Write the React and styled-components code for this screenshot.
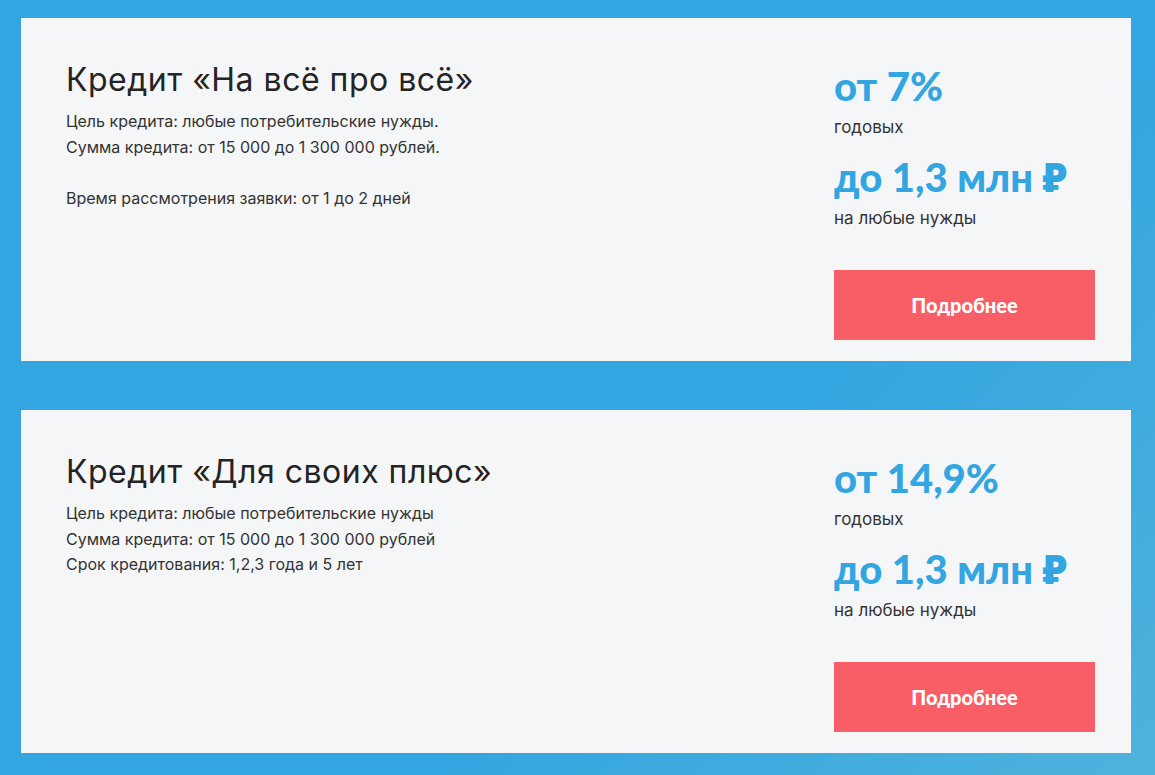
import React from "react";
import styled, { createGlobalStyle } from "styled-components";

const GlobalStyle = createGlobalStyle`
  html, body {
    margin: 0;
    padding: 0;
  }
  body {
    font-family: Inter, "Noto Sans", sans-serif;
    background: #33a5e0;
  }
`;

const credits = [
  {
    id: 1,
    title: "Кредит «На всё про всё»",
    lines: [
      "Цель кредита: любые потребительские нужды.",
      "Сумма кредита: от 15 000 до 1 300 000 рублей.",
      "",
      "Время рассмотрения заявки: от 1 до 2 дней",
    ],
    rate: "от 7%",
    sum: "до 1,3 млн ₽",
  },
  {
    id: 2,
    title: "Кредит «Для своих плюс»",
    lines: [
      "Цель кредита: любые потребительские нужды",
      "Сумма кредита: от 15 000 до 1 300 000 рублей",
      "Срок кредитования: 1,2,3 года и 5 лет",
    ],
    rate: "от 14,9%",
    sum: "до 1,3 млн ₽",
  },
];

const App = () => {
  return (
    <>
      <GlobalStyle />
      <Page>
        {credits.map(credit => {
          const { id, title, lines, rate, sum } = credit;
          return (
            <Card key={id}>
              <Info>
                <Title>{title}</Title>
                {lines.map((line, i) => (
                  <Line key={i}>{line}</Line>
                ))}
              </Info>
              <Offer>
                <Big $top={6}>{rate}</Big>
                <Caption>годовых</Caption>
                <Big $top={16}>{sum}</Big>
                <Caption>на любые нужды</Caption>
                <MoreButton>Подробнее</MoreButton>
              </Offer>
            </Card>
          );
        })}
      </Page>
    </>
  );
};

export default App;

const Page = styled.main`
  min-height: 775px;
  box-sizing: border-box;
  padding: 18px 24px 22px 21px;
  display: flex;
  flex-direction: column;
  gap: 49px;
  background: linear-gradient(135deg, #33a5e0 0%, #33a5e0 62%, #4fb3dc 100%);
`;

const Card = styled.section`
  width: 1110px;
  height: 343px;
  box-sizing: border-box;
  background: #f5f6f8;
  padding: 40px 36px 21px 45px;
  display: grid;
  grid-template-columns: 1fr 261px;
`;

const Info = styled.div`
  display: flex;
  flex-direction: column;
`;

const Title = styled.h2`
  margin: 0 0 7px;
  font-size: 32px;
  line-height: 44px;
  letter-spacing: 0.5px;
  font-weight: 400;
  color: #242424;
`;

const Line = styled.p`
  margin: 0;
  font-size: 16px;
  line-height: 25.6px;
  min-height: 25.6px;
  color: #333;
`;

const Offer = styled.div`
  display: flex;
  flex-direction: column;
`;

const Big = styled.div`
  margin-top: ${p => p.$top || 0}px;
  font-family: Lato, "Noto Sans", sans-serif;
  font-weight: 900;
  font-size: 40px;
  line-height: 44px;
  color: #33a6e1;
`;

const Caption = styled.div`
  margin-top: 7px;
  font-size: 17px;
  line-height: 24px;
  color: #333;
`;

const MoreButton = styled.button`
  margin-top: auto;
  width: 261px;
  height: 70px;
  border: none;
  background: #f85e66;
  color: #fff;
  font-family: Lato, "Noto Sans", sans-serif;
  font-weight: 900;
  font-size: 20px;
  cursor: pointer;
`;
